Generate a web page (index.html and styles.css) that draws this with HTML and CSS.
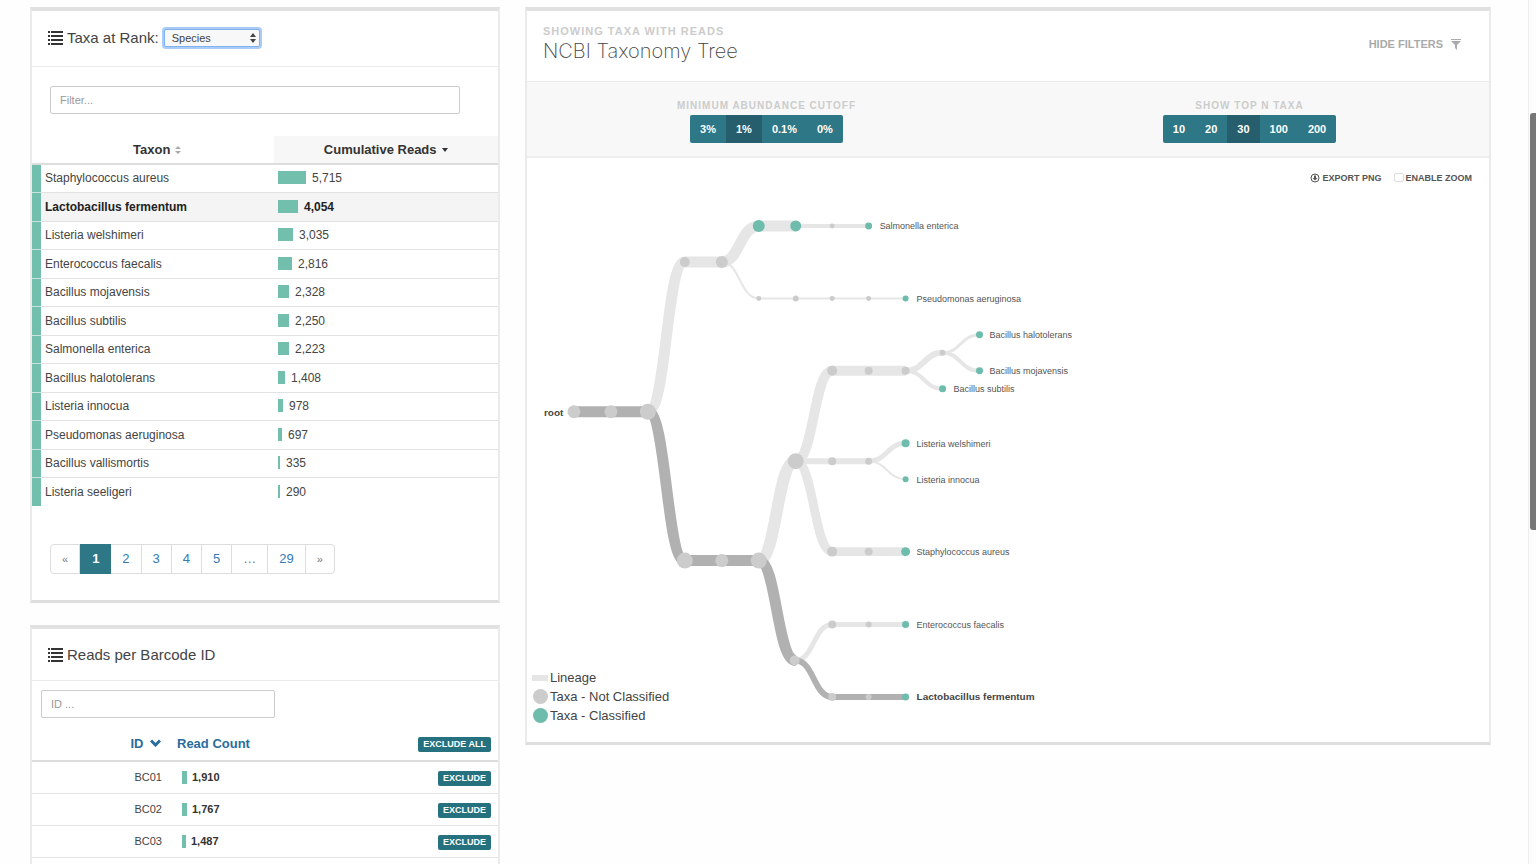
FILE: index.html
```html
<!DOCTYPE html>
<html lang="en">
<head>
<meta charset="utf-8">
<title>NCBI Taxonomy Tree</title>
<link rel="stylesheet" href="styles.css">
</head>
<body>
<svg class="defs" aria-hidden="true">
  <symbol id="list" viewBox="0 0 15 14"><path d="M0 0h2v2H0zM3 0h12v2H3zM0 4h2v2H0zM3 4h12v2H3zM0 8h2v2H0zM3 8h12v2H3zM0 12h2v2H0zM3 12h12v2H3z"/></symbol>
</svg>
<main class="page">
  <div class="column">
    <section class="card">
      <header class="card-head rank-head">
        <svg class="list-icon" aria-hidden="true"><use href="#list"/></svg>
        <label class="card-title" for="rank">Taxa at Rank:</label>
        <span class="rank">
          <select id="rank"><option>Species</option><option>Genus</option><option>Family</option></select>
          <svg class="rank-arrows" viewBox="0 0 6 10" aria-hidden="true"><path d="M3 0l3 4H0zM3 10L0 6h6z"/></svg>
        </span>
      </header>
      <div class="filter"><input class="field" type="text" placeholder="Filter..." aria-label="Filter taxa"></div>
      <table class="taxa">
        <thead><tr><th class="strip-head"></th><th class="name-head">Taxon <svg class="sort" viewBox="0 0 8 10" aria-hidden="true"><path d="M1 4l3-3 3 3zM1 6l3 3 3-3z"/></svg></th><th class="sorted">Cumulative Reads <svg class="caret" viewBox="0 0 6 4" aria-hidden="true"><path d="M0 0h6L3 4z"/></svg></th></tr></thead>
        <tbody>
          <tr><td class="strip"></td><td>Staphylococcus aureus</td><td><i class="bar" style="width:28px"></i>5,715</td></tr>
          <tr class="picked"><td class="strip"></td><td>Lactobacillus fermentum</td><td><i class="bar" style="width:20px"></i>4,054</td></tr>
          <tr><td class="strip"></td><td>Listeria welshimeri</td><td><i class="bar" style="width:15px"></i>3,035</td></tr>
          <tr><td class="strip"></td><td>Enterococcus faecalis</td><td><i class="bar" style="width:14px"></i>2,816</td></tr>
          <tr><td class="strip"></td><td>Bacillus mojavensis</td><td><i class="bar" style="width:11px"></i>2,328</td></tr>
          <tr><td class="strip"></td><td>Bacillus subtilis</td><td><i class="bar" style="width:11px"></i>2,250</td></tr>
          <tr><td class="strip"></td><td>Salmonella enterica</td><td><i class="bar" style="width:11px"></i>2,223</td></tr>
          <tr><td class="strip"></td><td>Bacillus halotolerans</td><td><i class="bar" style="width:7px"></i>1,408</td></tr>
          <tr><td class="strip"></td><td>Listeria innocua</td><td><i class="bar" style="width:5px"></i>978</td></tr>
          <tr><td class="strip"></td><td>Pseudomonas aeruginosa</td><td><i class="bar" style="width:4px"></i>697</td></tr>
          <tr><td class="strip"></td><td>Bacillus vallismortis</td><td><i class="bar" style="width:2px"></i>335</td></tr>
          <tr><td class="strip"></td><td>Listeria seeligeri</td><td><i class="bar" style="width:2px"></i>290</td></tr>
        </tbody>
      </table>
      <nav class="pager" aria-label="Pages">
        <button class="step">«</button><button class="current">1</button><button>2</button><button>3</button><button>4</button><button>5</button><button class="gap">…</button><button>29</button><button class="step">»</button>
      </nav>
    </section>

    <section class="card barcodes">
      <header class="card-head">
        <svg class="list-icon" aria-hidden="true"><use href="#list"/></svg>
        <h2 class="card-title">Reads per Barcode ID</h2>
      </header>
      <div class="id-filter"><input class="field" type="text" placeholder="ID ..." aria-label="Filter by barcode ID"></div>
      <table class="codes">
        <thead><tr><th class="id-col"><a href="#">ID</a> <svg class="chevron" viewBox="0 0 11 8" aria-hidden="true"><path d="M1 1.500l4.500 4.500L10 1.500"/></svg></th><th class="count-col"><a href="#">Read Count</a></th><th class="act-col"><button class="tag">EXCLUDE ALL</button></th></tr></thead>
        <tbody>
          <tr><td class="id-col">BC01</td><td class="count"><i class="bar" style="width:5px"></i>1,910</td><td class="act-col"><button class="tag">EXCLUDE</button></td></tr>
          <tr><td class="id-col">BC02</td><td class="count"><i class="bar" style="width:5px"></i>1,767</td><td class="act-col"><button class="tag">EXCLUDE</button></td></tr>
          <tr><td class="id-col">BC03</td><td class="count"><i class="bar" style="width:4px"></i>1,487</td><td class="act-col"><button class="tag">EXCLUDE</button></td></tr>
        </tbody>
      </table>
    </section>
  </div>

  <section class="card tree-card">
    <header class="tree-head">
      <div>
        <p class="eyebrow">SHOWING TAXA WITH READS</p>
        <h1 class="tree-title">NCBI Taxonomy Tree</h1>
      </div>
      <button class="hide-filters">HIDE FILTERS <svg viewBox="0 0 10 11" aria-hidden="true"><path d="M0 0h10v1H0zM0 2h10L6 6v5L4 9V6z"/></svg></button>
    </header>
    <div class="filters">
      <div class="option">
        <span class="eyebrow">MINIMUM ABUNDANCE CUTOFF</span>
        <div class="group"><button>3%</button><button class="on">1%</button><button>0.1%</button><button>0%</button></div>
      </div>
      <div class="option">
        <span class="eyebrow">SHOW TOP N TAXA</span>
        <div class="group"><button>10</button><button>20</button><button class="on">30</button><button>100</button><button>200</button></div>
      </div>
    </div>
    <div class="tools">
      <button class="tool"><svg viewBox="0 0 10 10" aria-hidden="true"><circle cx="5" cy="5" r="4" fill="none" stroke="currentColor"/><path d="M4 2.500h2V5h1.500L5 7.500 2.500 5H4z"/></svg>EXPORT PNG</button>
      <label class="tool"><input type="checkbox">ENABLE ZOOM</label>
    </div>
    <div class="canvas">
      <svg class="tree" viewBox="527 197 963 546" role="img" aria-label="Taxonomy tree">
        <g class="links">
          <path d="M648 412C666.500 412 666.500 262 685 262H722" stroke-width="11"/>
          <path d="M722 262C740 262 740 226 759 226H796" stroke-width="11"/>
          <path d="M796 226H869" stroke-width="4"/>
          <path d="M722 262C740 262 740 298.500 759 298.500H906" stroke-width="2"/>
          <path d="M759 561C777 561 777 461.500 796 461.500" stroke-width="12"/>
          <path d="M796 461.500C814 461.500 814 371 832.500 371" stroke-width="10"/>
          <path d="M832.500 371H906" stroke-width="10"/>
          <path d="M906 371C924.500 371 924.500 353 943 353" stroke-width="6"/>
          <path d="M943 353C961 353 961 335 980 335" stroke-width="3"/>
          <path d="M943 353C961 353 961 371 980 371" stroke-width="4"/>
          <path d="M906 371C924.500 371 924.500 389 943 389" stroke-width="4"/>
          <path d="M796 461.500H869" stroke-width="6"/>
          <path d="M869 461.500C887.500 461.500 887.500 443.500 906 443.500" stroke-width="5"/>
          <path d="M869 461.500C887.500 461.500 887.500 479.500 906 479.500" stroke-width="2"/>
          <path d="M796 461.500C814 461.500 814 552 832.500 552H906" stroke-width="9"/>
          <path d="M796 661C814 661 814 625 832.500 625H906" stroke-width="5"/>
          <g class="active">
            <path d="M574 412H648C666.500 412 666.500 561 685 561H759C777 561 777 661 796 661" stroke-width="11"/>
            <path d="M796 661C814 661 814 697.500 832.500 697.500H906" stroke-width="6"/>
          </g>
        </g>
        <g class="nodes">
          <circle cx="574" cy="412" r="6.500"/><circle cx="611" cy="412" r="6.500"/><circle cx="648" cy="412" r="8"/>
          <circle cx="685" cy="262" r="5"/><circle cx="722" cy="262" r="6"/>
          <circle cx="832.500" cy="226" r="2.500"/>
          <circle cx="759" cy="298.500" r="2.500"/><circle cx="796" cy="298.500" r="3"/><circle cx="832.500" cy="298.500" r="2.500"/><circle cx="869" cy="298.500" r="2.500"/>
          <circle cx="685" cy="561" r="8"/><circle cx="722" cy="561" r="6.500"/><circle cx="759" cy="561" r="8"/>
          <circle cx="796" cy="461.500" r="8"/>
          <circle cx="832.500" cy="371" r="5"/><circle cx="869" cy="371" r="4"/><circle cx="906" cy="371" r="4"/><circle cx="943" cy="353" r="3"/>
          <circle cx="832.500" cy="461.500" r="4"/><circle cx="869" cy="461.500" r="3.500"/>
          <circle cx="832.500" cy="552" r="5"/><circle cx="869" cy="552" r="4"/>
          <circle cx="795" cy="661" r="5"/>
          <circle cx="832.500" cy="625" r="4"/><circle cx="869" cy="625" r="3"/>
          <circle cx="832.500" cy="697.500" r="4"/><circle cx="869" cy="697.500" r="3"/>
        </g>
        <g class="nodes classified">
          <circle cx="759" cy="226" r="6"/><circle cx="796" cy="226" r="5.500"/><circle cx="869" cy="226" r="3.500"/>
          <circle cx="906" cy="298.500" r="3"/>
          <circle cx="980" cy="335" r="3.500"/><circle cx="980" cy="371" r="3.500"/><circle cx="943" cy="389" r="3.500"/>
          <circle cx="906" cy="443.500" r="4"/><circle cx="906" cy="479.500" r="3"/><circle cx="906" cy="552" r="4.500"/>
          <circle cx="906" cy="625" r="3.500"/><circle cx="906" cy="697.500" r="3.500"/>
        </g>
        <g class="labels">
          <text class="strong" x="544" y="416">root</text>
          <text x="880" y="229">Salmonella enterica</text>
          <text x="917" y="302">Pseudomonas aeruginosa</text>
          <text x="990" y="338">Bacillus halotolerans</text>
          <text x="990" y="374">Bacillus mojavensis</text>
          <text x="954" y="392">Bacillus subtilis</text>
          <text x="917" y="447">Listeria welshimeri</text>
          <text x="917" y="483">Listeria innocua</text>
          <text x="917" y="555">Staphylococcus aureus</text>
          <text x="917" y="628">Enterococcus faecalis</text>
          <text class="strong" x="917" y="701">Lactobacillus fermentum</text>
        </g>
      </svg>
      <ul class="legend">
        <li><i class="key line"></i>Lineage</li>
        <li><i class="key dot"></i>Taxa - Not Classified</li>
        <li><i class="key dot teal"></i>Taxa - Classified</li>
      </ul>
    </div>
  </section>
</main>
<div class="scrollbar" aria-hidden="true"><div class="thumb"></div></div>
</body>
</html>
```

FILE: styles.css
```css
* { box-sizing: border-box; }

body {
  margin: 0;
  height: 100vh;
  overflow: hidden;
  background: #fefefe;
  color: #444;
  font: 13px/18px "Liberation Sans", Arial, sans-serif;
}

button, input, select { font: inherit; color: inherit; margin: 0; }
button { border: 0; padding: 0; background: none; cursor: pointer; }
h1, h2, p, ul { margin: 0; padding: 0; }
a { color: #2a6c9c; text-decoration: none; }
table { width: 100%; border-collapse: collapse; table-layout: fixed; }
td, th { padding: 0; }
svg { fill: currentColor; }
.defs { position: absolute; width: 0; height: 0; }

.page {
  display: grid;
  grid-template-columns: 470fr 966fr;
  column-gap: 25px;
  align-items: start;
  padding: 7px 45px 0 30px;
}
.column { display: flex; flex-direction: column; gap: 22px; }

.card {
  background: #fff;
  border: 2px solid #ebebeb;
  border-top: 4px solid #e1e1e1;
  border-bottom: 3px solid #dedede;
}
.card-head {
  display: flex;
  align-items: center;
  height: 56px;
  padding: 0 16px 2px;
  border-bottom: 1px solid #eaeaea;
}
.card-title { font-size: 15px; line-height: 20px; font-weight: 400; margin: 0 5px 0 4px; }
.list-icon { width: 15px; height: 14px; color: #333; }

.rank { position: relative; display: flex; }
.rank select {
  width: 96px;
  height: 18px;
  padding: 0 7px;
  appearance: none;
  border: 1px solid #7fb2ee;
  border-radius: 2px;
  background: #f8f8f8;
  box-shadow: 0 0 0 2px #a9cbf5;
  font-size: 11px;
  line-height: 16px;
  outline: 0;
}
.rank-arrows { position: absolute; right: 4px; top: 4px; width: 6px; height: 10px; }

.field {
  display: block;
  width: 100%;
  height: 28px;
  padding: 0 9px;
  border: 1px solid #ccc;
  border-radius: 2px;
  background: #fff;
  font-size: 11px;
}
.field::placeholder { color: #999; opacity: 1; }
.filter { padding: 19px 38px 22px 18px; }

.taxa th { height: 28px; text-align: center; border-bottom: 2px solid #ddd; color: #333; }
.taxa .strip-head { width: 9px; }
.taxa .name-head { width: 233px; }
.taxa .sorted { background: #f7f7f7; }
.sort { width: 8px; height: 10px; color: #aaa; vertical-align: -1px; }
.caret { width: 6px; height: 4px; margin-left: 2px; vertical-align: 2px; }
.taxa td { height: 28px; padding-left: 4px; border-bottom: 1px solid #e2e2e2; font-size: 12px; }
.taxa tr:nth-child(even) td { height: 29px; }
.taxa td.strip { padding: 0; background: #72bfae; border-color: #c8e4dd; }
.taxa tr:last-child td { border-bottom: 0; }
.picked td { background: #f4f4f4; font-weight: 700; color: #222; }
.bar { display: inline-block; height: 13px; margin-right: 6px; background: #72bfae; vertical-align: -2px; }

.pager {
  display: flex;
  width: max-content;
  margin: 38px 18px 26px;
  border: 1px solid #ddd;
  border-radius: 4px;
}
.pager button { height: 28px; padding: 0 11px; border-right: 1px solid #ddd; color: #337ab7; }
.pager button:last-child { border-right: 0; }
.pager .step { font-size: 11px; color: #777; }
.pager .gap { color: #777; }
.pager .current { margin: -1px 0; height: 30px; border: 0; padding: 0 12px; background: #2d7787; color: #fff; font-weight: 700; }

.barcodes { min-height: 260px; }
.barcodes .card-head { height: 52px; padding-bottom: 0; }
.id-filter { width: calc(50% + 10px); padding: 9px 0 10px 9px; }
.codes th { height: 33px; border-bottom: 2px solid #ddd; text-align: left; }
.codes td { height: 32px; border-bottom: 1px solid #e4e4e4; font-size: 11px; }
.codes td.count { padding-left: 20px; font-weight: 700; font-size: 11px; color: #333; }
.codes .count .bar { margin-right: 5px; vertical-align: -3px; }
.codes .id-col { width: 130px; text-align: right; }
.codes .count-col { padding-left: 15px; }
.codes .act-col { width: 120px; padding-right: 7px; text-align: right; }
.chevron { width: 11px; height: 8px; margin: 0 1px 0 3px; vertical-align: 1px; fill: none; stroke: #2a6c9c; stroke-width: 3; }
.tag {
  height: 15px;
  padding: 0 5px;
  border-radius: 2px;
  background: #25717f;
  color: #fff;
  font-size: 9px;
  font-weight: 700;
  line-height: 15px;
  vertical-align: middle;
}

.tree-head {
  display: flex;
  justify-content: space-between;
  align-items: center;
  height: 71px;
  padding: 0 28px 4px 16px;
  border-bottom: 1px solid #eaeaea;
}
.eyebrow { font-size: 11px; line-height: 14px; font-weight: 700; letter-spacing: 1px; color: #ccc; }
.tree-title { font: 200 20px/26px Inter, "Liberation Sans", sans-serif; color: #444; }
.hide-filters { display: flex; align-items: center; gap: 8px; font-size: 11px; font-weight: 700; color: #aaa; }
.hide-filters svg { width: 10px; height: 11px; }

.filters {
  display: grid;
  grid-template-columns: 1fr 1fr;
  column-gap: 4px;
  height: 76px;
  padding: 17px 0;
  background: #f8f8f8;
  border-bottom: 2px solid #eee;
}
.filters .eyebrow { font-size: 10px; }
.option { display: flex; flex-direction: column; align-items: center; gap: 2px; }
.group { display: flex; overflow: hidden; border-radius: 2px; background: #2d7787; }
.group button { height: 28px; padding: 0 10px; color: #fff; font-size: 11px; font-weight: 700; }
.group .on { background: #265e6d; }

.tools { display: flex; justify-content: flex-end; gap: 12px; height: 39px; padding: 0 17px; align-items: center; }
.tool { display: flex; align-items: center; gap: 2px; font-size: 9px; font-weight: 700; color: #555; }
.tool svg { width: 10px; height: 10px; }
.tool input { appearance: none; width: 10px; height: 9px; border: 1px solid #ddd; border-radius: 2px; background: #fff; }

.canvas { position: relative; }
.tree { display: block; width: 100%; height: auto; }
.links { fill: none; stroke: #e6e6e6; }
.links .active { stroke: #b1b1b1; }
.nodes { fill: #ccc; }
.classified { fill: #6dbcac; }
.labels { font-size: 9px; fill: #555; }
.labels .strong { font-size: 10px; font-weight: 700; fill: #444; }

.legend { position: absolute; left: 5px; bottom: 17px; list-style: none; }
.legend li { display: flex; align-items: center; gap: 2px; height: 19px; }
.key { width: 16px; height: 6px; background: #e6e6e6; }
.key.dot { width: 15px; height: 15px; margin-left: 1px; border-radius: 50%; background: #ccc; }
.key.teal { background: #6dbcac; }

.scrollbar { position: fixed; top: 0; right: 0; bottom: 0; width: 8px; border-left: 1px solid #eee; background: #fcfcfc; }
.thumb { height: 417px; margin: 113px 0 0 1px; border-radius: 3px 0 0 3px; background: #777; }
```
